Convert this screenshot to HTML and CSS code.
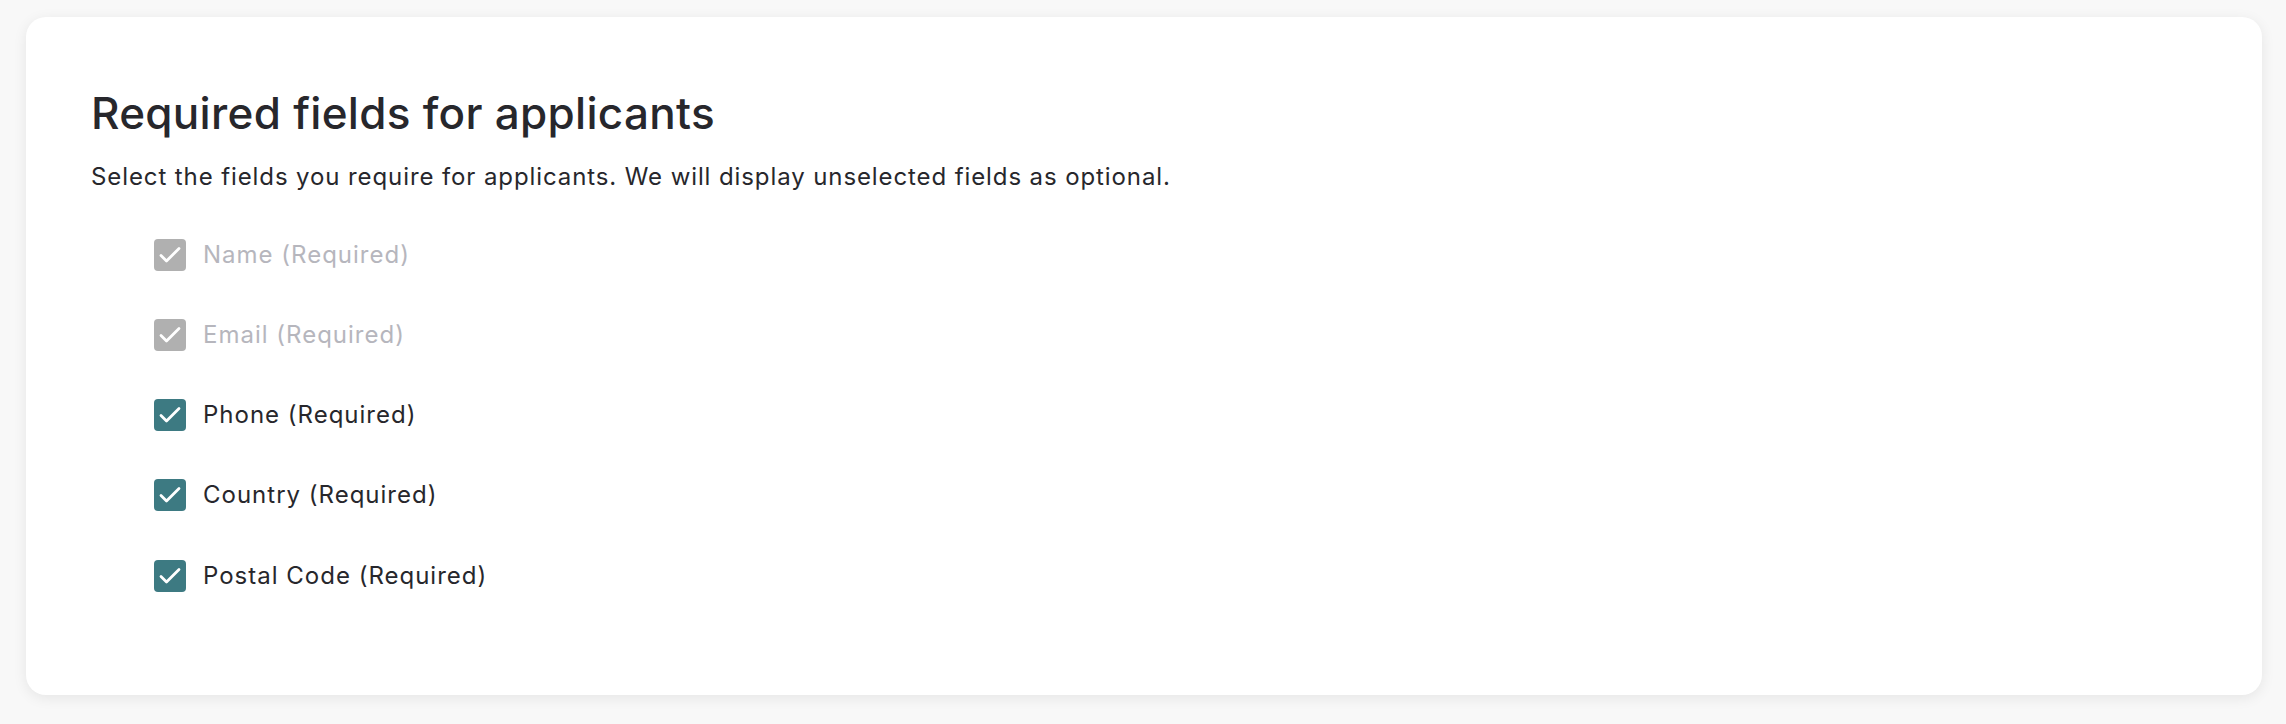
FILE: index.html
```html
<!DOCTYPE html>
<html>
<head>
<meta charset="utf-8">
<link rel="stylesheet" href="styles.css">
</head>
<body>
<div class="card">
  <h1 class="title">Required fields for applicants</h1>
  <p class="subtitle">Select the fields you require for applicants. We will display unselected fields as optional.</p>
  <ul class="fields">
    <li class="field disabled"><span class="box"><svg viewBox="0 0 32 32"><path d="M7 16.5l5.5 5.5L25 9.5" /></svg></span><span class="label">Name (Required)</span></li>
    <li class="field disabled"><span class="box"><svg viewBox="0 0 32 32"><path d="M7 16.5l5.5 5.5L25 9.5" /></svg></span><span class="label">Email (Required)</span></li>
    <li class="field"><span class="box"><svg viewBox="0 0 32 32"><path d="M7 16.5l5.5 5.5L25 9.5" /></svg></span><span class="label">Phone (Required)</span></li>
    <li class="field"><span class="box"><svg viewBox="0 0 32 32"><path d="M7 16.5l5.5 5.5L25 9.5" /></svg></span><span class="label">Country (Required)</span></li>
    <li class="field"><span class="box"><svg viewBox="0 0 32 32"><path d="M7 16.5l5.5 5.5L25 9.5" /></svg></span><span class="label">Postal Code (Required)</span></li>
  </ul>
</div>
</body>
</html>
```

FILE: styles.css
```css
html, body {
  margin: 0;
  background: #f8f8f8;
}
body {
  padding: 17px 24px 29px 26px;
  font-family: Inter, "Noto Sans", sans-serif;
  color: #27272c;
}
.card {
  background: #ffffff;
  border-radius: 20px;
  box-shadow: 0 3px 14px rgba(0, 0, 0, 0.08);
  padding: 70px 65px 103px 65px;
  height: 505px;
}
.title {
  margin: 0;
  font-size: 44px;
  font-weight: 500;
  line-height: 52.8px;
  letter-spacing: 0.3px;
}
.subtitle {
  margin: 22px 0 0 0;
  font-size: 24px;
  line-height: 30.8px;
  letter-spacing: 0.9px;
}
.fields {
  list-style: none;
  margin: 46px 0 0 63px;
  padding: 0;
  display: flex;
  flex-direction: column;
  gap: 48.3px;
}
.field {
  display: flex;
  align-items: center;
  gap: 17px;
  height: 32px;
}
.box {
  width: 32px;
  height: 32px;
  border-radius: 4px;
  background: #3d7a82;
  display: flex;
  align-items: center;
  justify-content: center;
  flex: none;
}
.box svg {
  width: 32px;
  height: 32px;
  fill: none;
  stroke: #ffffff;
  stroke-width: 2.8;
  stroke-linecap: round;
  stroke-linejoin: round;
}
.label {
  font-size: 24px;
  line-height: 32px;
  letter-spacing: 1px;
}
.disabled .box {
  background: #b0b0b0;
}
.disabled .label {
  color: #b6b6bd;
}
```
